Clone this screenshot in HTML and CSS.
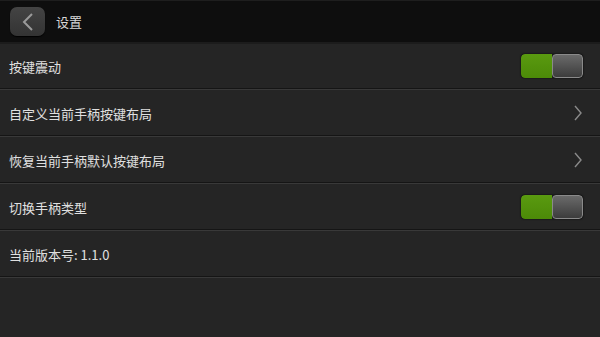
FILE: index.html
```html
<!DOCTYPE html>
<html>
<head>
  <meta charset="utf-8">
  <title>设置</title>
  <link rel="stylesheet" href="styles.css">
</head>
<body>
  <div class="header">
    <div class="back-btn">
      <svg width="14" height="20" viewBox="0 0 14 20"><path d="M11 2 L3 10 L11 18" fill="none" stroke="#9a9a9a" stroke-width="2"/></svg>
    </div>
    <span class="title">设置</span>
  </div>

  <ul class="settings">
    <li class="row">
      <span>按键震动</span>
      <span class="toggle"><span class="on"></span><span class="knob"></span></span>
    </li>
    <li class="row">
      <span>自定义当前手柄按键布局</span>
      <svg class="arrow" width="10" height="16" viewBox="0 0 10 16"><path d="M2 1 L8 8 L2 15" fill="none" stroke="#8a8a8a" stroke-width="1.4"/></svg>
    </li>
    <li class="row">
      <span>恢复当前手柄默认按键布局</span>
      <svg class="arrow" width="10" height="16" viewBox="0 0 10 16"><path d="M2 1 L8 8 L2 15" fill="none" stroke="#8a8a8a" stroke-width="1.4"/></svg>
    </li>
    <li class="row">
      <span>切换手柄类型</span>
      <span class="toggle"><span class="on"></span><span class="knob"></span></span>
    </li>
    <li class="row">
      <span>当前版本号: 1.1.0</span>
    </li>
  </ul>
</body>
</html>
```

FILE: styles.css
```css
body {
  margin: 0;
  width: 600px;
  height: 337px;
  overflow: hidden;
  background-color: #252525;
  font-family: "Noto Sans CJK SC", Roboto, sans-serif;
  color: #e0e0e0;
}

.header {
  height: 41px;
  background-color: #0e0e0e;
  border-top: 1px solid #1e1e1e;
  border-bottom: 2px solid #1c1c1c;
  display: flex;
  align-items: center;
  padding-left: 10px;
}

.back-btn {
  width: 35px;
  height: 29px;
  border-radius: 7px;
  background: linear-gradient(#444, #333);
  box-shadow: 0 1px 1px #000;
  display: flex;
  align-items: center;
  justify-content: center;
}

.title {
  margin-left: 11px;
  font-size: 13px;
  color: #d8d8d8;
}

.settings {
  list-style: none;
  margin: 0;
  padding: 0;
}

.row {
  height: 44px;
  border-bottom: 1px solid #151515;
  box-shadow: 0 1px 0 #393939;
  margin-bottom: 2px;
  display: flex;
  align-items: center;
  justify-content: space-between;
  padding: 0 17px 0 9px;
  font-size: 13px;
}

.toggle {
  display: flex;
  width: 62px;
  height: 24px;
  border-radius: 4px;
  overflow: hidden;
  background: #1a1a1a;
  box-shadow: 0 0 2px #000;
}

.on {
  width: 31px;
  background: linear-gradient(#5a9a10, #4c8a08);
  border-radius: 4px 0 0 4px;
}

.knob {
  width: 31px;
  border-radius: 4px;
  background: linear-gradient(#6a6a6a, #3c3c3c);
  border: 1px solid #8a8a8a;
  box-sizing: border-box;
}
```
